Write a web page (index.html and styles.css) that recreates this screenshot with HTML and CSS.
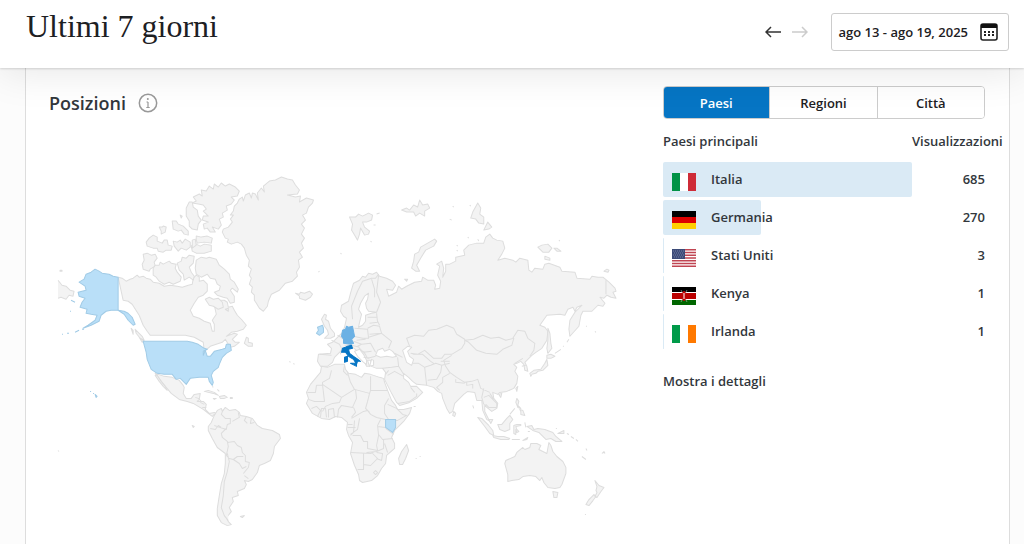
FILE: index.html
```
<!DOCTYPE html>
<html lang="it">
<head>
    <meta charset="UTF-8">
    <meta name="viewport" content="width=device-width, initial-scale=1.0">
    <title>Ultimi 7 giorni</title>
    <link rel="stylesheet" href="styles.css">
</head>
<body>

    <header class="topbar">
        <h1>Ultimi 7 giorni</h1>
        <div class="period">
            <button class="arrow" type="button" aria-label="Periodo precedente">
                <svg width="16" height="12" viewBox="0 0 16 12"><path d="M16 6H1M6 1L1 6l5 5"/></svg>
            </button>
            <button class="arrow" type="button" aria-label="Periodo successivo" disabled>
                <svg width="16" height="12" viewBox="0 0 16 12"><path d="M0 6h15M10 1l5 5-5 5"/></svg>
            </button>
            <button class="date-range" type="button">
                <span>ago 13 - ago 19, 2025</span>
                <svg width="18" height="18" viewBox="0 0 18 18">
                    <rect x="1" y="1" width="16" height="16" rx="2" fill="none" stroke="#222" stroke-width="1.6"/>
                    <path d="M1 1h16v4H1z" fill="#111"/>
                    <path d="M4 8h2v2H4zM8 8h2v2H8zM12 8h2v2h-2zM4 11h2v2H4zM8 11h2v2H8zM12 11h2v2h-2z" fill="#222"/>
                </svg>
            </button>
        </div>
    </header>

    <main class="card">
        <section class="locations">
            <h2>Posizioni
                <svg class="info" width="20" height="20" viewBox="0 0 20 20">
                    <circle cx="10" cy="10" r="8.7" fill="none" stroke="#999" stroke-width="1.5"/>
                    <path d="M10 9v5.500M8.500 9H10M8.300 14.500h3.400" stroke="#999" stroke-width="1.200" fill="none"/>
                    <circle cx="9.800" cy="6" r="1" fill="#999"/>
                </svg>
            </h2>

            <svg class="map" viewBox="50 170 570 360" role="img" aria-label="Mappa delle visualizzazioni per paese">
                <!-- north america -->
                <g class="land">
                    <path d="M119 277l4 1 4 3 4-2 3-1 4-3 2 2 4-1 3 2 4 1 3 3 6 1 5 3 6-1 7 1 5 1 6-2 4-1 1-6 3-3 3 2 0 4 4-1 4 4 0 7-4 4-5 2-4 6-4 7 3 6 6 2 5 3 6 2 2 8 2 0 0-7-2-4 4-6-2-9 3-5 7 0 3 2 1 5 4-1 2 4 3 5 4 4 5 6-3 4-6 2-6 1-5 4 8-3 3 1-5 5 3 3 4 0-5 4-4 1-2-3-3-5-3 3-12 4-6 5-1-9-9-5-9-2-35 0-3-4-4-6-4-10-7-11-4-3-5-1z"/>
                    <path d="M156 373l9 3 8 1 7 3 4 5 1 2-1 6 3 5 5 0 3-4 6-1-1 6-2 2 6 0 3 3-1 5 4 4 5-1 5 2-2 1-3-1-2 2-4-3-5-4-5-3-5-3-6-2-8-2-8-6-5-6-5-6z"/>
                    <path d="M158 375l4 6 4 5 2 4-4-4-4-5-4-6z"/>
                    <path d="M196 397l3 1 3 3M201 402l4 2M203 407l4 0"/>
                    <path d="M205 391l4-1 6 2 4 3-5-2zM220 396l5-1 3 2-3 1-4 0zM214 398l3 0-2 1zM231 397l2 0 0 1-2 0zM213 386l1 1M218 389l2 2"/>
                    <path d="M245 343l2-6 2 1 0 4 4 1 0 3-4 0z"/>
                    <path d="M132 328l2 2 0 4zM136 329l3 3 4 4 2 4-4-2-4-5zM140 337l5 4-2 1z"/>
                </g>
                <!-- arctic islands -->
                <g class="land">
                    <path d="M264 311L260 308 257 303 255 300 255 295 252 292 253 287 250 284 252 278 250 275 252 269 249 266 250 260 247 255 245 248 242 244 238 242 232 244 228 242 229 239 226 238 223 232 224 229 229 227 233 222 231 219 234 215 231 215 234 211 235 206 238 203 240 199 243 197 244 201 246 195 250 193 252 198 253 193 256 194 259 200 258 193 262 188 265 192 264 186 270 181 276 180 282 177 288 179 293 180 296 185 300 190 298 194 288 195 296 197 301 196 300 202 307 198 314 200 313 203 309 207 307 213 303 215 306 220 302 224 305 228 302 234 305 238 302 243 304 248 300 252 303 257 299 260 300 267 297 272 298 276 293 281 286 283 280 290 272 294 269 301 268 306z"/>
                    <path d="M296 293l4 1 1-2 4 1 5-2 3 3-2 3-5 3-6-2 0-2z"/>
                    <path d="M193 203l4-2-3-4 6-3 3 2-1-6 5 1 3-5 4 3 1-5 4 3 3-4 4 3 4-2 6 3 4 4-2 5-6 1 3 3-3 4-5 2 1 4-5 3 1 4-4 2 2 6-3 4-6-2 3 5-5 0-3-4-3 1-1-5 5-2-6-2 1-4 5 0-5-5 3-2-3-4-5-1z"/>
                    <path d="M187 208l3-6 3 0 1 5 4 3 1 6 3 4-3 4-1 6-5-1-3-3 0-5-3-5z"/>
                    <path d="M192 246l3-3 6 3 4-2 7 1 0 6-7 2-8 0-4-2zM197 236l5 1 6-1 5 2-1 5-7-1-7 1-1-3z"/>
                    <path d="M173 221l4 0 2 3 5 2 5 5 0 4-4-1-3-4-3 1-5-2zM160 227l3 0 1-1 3 1-1 5-4 2 0-3zM181 215l2 1-1 2z"/>
                    <path d="M147 242l3-4 4-3 4 2 0 4 5 2 2-3 3 0 1 5 4 1-1 4-5 0-3 2-5-1-1-3-4 0-6-2z"/>
                    <path d="M174 241l4 1 3-2 2 3 3-4 5 3 0 5-4 3-5-2-3 3-4-5zM193 240l3-1 1 6-4 3z"/>
                    <path d="M144 254l4-1 4 2 4-1 2 4-3 4 1 4-5 3-1 2-6-2-1-5 2-4z"/>
                    <path d="M154 268l2-3 4 0 1-3 3 2 6-3 2 2 5 1-1 4 2 4 4 5-1 4-7 3-4-2-5 2-5-3-3-4-3-2z"/>
                    <path d="M178 263l4-2 1-4 4 1 3-3 5 1-1 7-4 4 2 5 3 4-1 4-4-3-5 3-1-6-4-4z"/>
                    <path d="M197 260l5-3 5 1 3-1 7 2 3 6 5 4 5 5 1 5 4 3 4 7-1 3-5-4-2 2 4 6 0 6-4 1-3-5-4-1-6-2-3-3 5-2 1-4-3-2-2-5-5-1-3-4-6 3-5-3-1-6z"/>
                    <path d="M206 299l4-2 4 2 5-1 4 4 1 5-5 2-5-3-4-1zM226 309l3-1 0 3z"/>
                </g>
                <!-- south america -->
                <g class="land">
                    <path d="M215 415L218 410 222 408 223 411 226 407 230 410 236 409 240 412 241 415 247 416 253 418 256 422 258 425 263 428 273 430 280 434 281 438 278 442 275 446 274 453 271 460 265 463 260 465 258 472 253 479 249 481 245 480 247 484 245 488 238 491 239 495 233 497 234 501 230 507 232 511 227 517 229 521 232 524 228 525 222 522 218 515 218 508 220 495 222 483 225 473 226 463 226 453 218 447 213 438 209 430 209 426 212 422z"/>
                    <path d="M224 409l-2 5 4 4 5 0 0 5-3 1-1 5-6-2-6-2M211 428l5 1 3-4 3 2M239 412l1 5-7 4M247 416l-2 4 3 3M252 418l-1 5 4-1M227 428l-5 5 1 4 5 4 1 5M228 442l7-1 3 4 4 2 1 5 3 3 0 6 4 1-1 5-5 6M229 446l-2 9 3 3 4 1 4-3 6 0M228 453l2 8-2 10-3 10-1 14-2 12 3 8 4 5M234 459l6 4 3 5 4-2M245 475l4 3"/>
                    <path d="M241 516l4-1-2 2zM193 425l2 1-1 1zM290 361l1 1M294 363l1 1"/>
                </g>
                <!-- eurasia -->
                <g class="land">
                    <path d="M341 311L342 305 349 301 351 293 354 283 360 280 363 276 366 277 369 273 373 274 377 272 380 276 387 278 393 281 396 285 393 290 387 289 389 296 397 292 399 286 402 289 407 286 415 282 422 281 423 277 428 280 434 280 436 285 435 289 440 288 441 281 438 275 440 266 437 264 442 261 444 268 443 277 446 271 446 264 450 264 456 261 456 257 465 255 464 250 469 245 477 243 484 243 486 237 490 234 493 238 497 240 503 241 505 248 502 254 498 260 505 258 513 260 516 262 520 258 528 260 529 270 532 272 535 268 543 269 545 264 549 263 560 267 562 271 575 272 577 278 590 279 592 276 598 277 603 277 609 282 615 288 616 291 613 292 616 298 611 297 607 295 604 298 600 297 605 303 603 306 598 305 592 311 583 311 581 315 579 326 570 336 569 329 570 320 575 312 582 305 577 307 575 311 573 307 568 309 565 315 560 314 547 315 540 325 545 327 548 331 547 340 542 348 536 352 532 355 525 362 527 366 528 371 525 370 524 364 521 361 517 363 514 364 517 367 515 371 518 376 517 383 514 388 507 391 500 392 498 394 493 392 494 398 498 403 497 408 492 411 487 407 485 404 485 411 490 421 487 419 483 410 482 400 477 400 475 392 468 391 464 394 455 403 453 411 450 413 447 408 443 398 442 393 438 391 434 387 427 385 417 384 413 381 409 377 404 373 404 378 409 382 411 386 417 386 423 392 417 398 410 402 400 405 397 402 391 391 385 379 386 372 383 368 377 368 372 366 371 360 368 360 370 366 367 366 363 358 357 350 352 346 346 349 342 350 335 357 333 362 328 366 321 366 318 361 319 354 331 353 332 348 328 344 333 342 338 337 343 332 345 327 347 318 344 316z"/>
                    <path d="M322 319l3-5 2 1-1 4 3 2 2 7 4 5 0 3-4 2-6 0 4-4-1-4-3-4z"/>
                    <path d="M350 217l6 0 3-3 4 2 6-3 4 2-1 5-5 2-4 0 2 5 5 4-1 3-4 1-4-7-1 6-2 6-3-5-3-5 1-6zM377 214l3-1M374 225l2 0M341 253l1 1M371 241l1 1M319 272l1-1"/>
                    <path d="M402 210l5-2 3 2 4-5 4 2 2-7 3 5 5-1 2 4-5 3 0 5-5-3-4 3-2-4-7 0zM450 219l2 1M453 206l1 1"/>
                    <path d="M412 268l2-7 1-7 4-2 2-5 7-4 7-4 2 2-3 5-8 4-5 8-4 7 3 6-4 0zM405 279l3 0-1 2z"/>
                    <path d="M471 218l2-6 5-9 3 5-1 6 4 3 0 7-5-1-3-4zM484 230l4-8 4 5-3 2zM470 205l1 1M468 237l1 1M457 245l1 1M478 239l1 2M457 250l1 1"/>
                    <path d="M538 247l4-2 6-1 4 4-3 4-6 0zM554 248l3 0 4 3-4 0zM545 256l5 2 0 2-5-1zM604 271l3-2 2 1-1 2zM559 240l1 1"/>
                    <path d="M548 328l2 5 1 10 1 5-4 5-1-5 1-8zM547 355l4-1 4 2-4 2-4 0zM547 359l1 6-5 5-5 1-2 2-4 1-1 2-1-3 4-3 7-1 4-6zM555 353l6-4M563 346l1 0M586 326l1 0M595 331l1 1M567 342l2-3"/>
                    <path d="M516 388l2-2-1 5zM499 394l3-1-1 4zM454 411l2 2-1 3-2-1zM473 405l1 3M414 406l2 0"/>
                </g>
                <g class="sea">
                    <path d="M360 322l2-8-3-5 2-6 4-7 4-3-1 6-2 4 1 5 2 3 8 1-5 1-6 2 0 6-3 4-4 2z"/>
                    <path d="M376 355l2-5 5-2 2 3 5-2 3 2 4 5-4 1-6-1-6 1z"/>
                    <path d="M403 350l5-4 4 1-4 4 2 5 4 3-2 6-5-3z"/>
                    <path d="M360 349l4 5 3 6 0 4-3-2-6-6-3-5zM370 366l2-7 2 1 0 5z"/>
                </g>
                <g class="border">
                    <path d="M353 319l-1-13 6-15 5-10 9-3 4 0 3-4M372 279l3 10 0 8M377 312l4-10-4-10 2-17M368 317l9 0M370 323l8-1-1-9M368 328l6-3 6 1 2 7-12 1M355 328l13 1 1 9-6 0-9-2M369 337l13-4 10 8-3 7M380 325l-2-4M354 341l8 3 9-1 5 9M362 344l-4 2 6 6 8-1M364 351l4 7 8-2M332 340l8 4 2 4-1 6M320 354l12 1M338 335l5 3M395 353l8 4M398 357l1 9-7 1-9 1M399 366l5 8M352 345l8 2M357 340l9-1M345 345l8 0M364 357l6 1"/>
                    <path d="M410 346l-3-8 8-3 9 1 5-6 8-1 10-4 7 3 3 6 8 5 0 4-3 5-10 6-7 0-3 4-8 0-9-8-7 4-7-1M465 340l9-1 9-4 8 3 8-1 7 3 8-2-2 7-9 4-6 5-11-1-9-3-8-8-4-2M513 338l5-8 7 1 3 7 7 5-1 7-4 6M452 355l-8 5 2 6 4 6 7 5 8 5 7-1 6-2 3 9 9 4M467 382l0 3 6-1 0 4M456 379l0 3 9 1M440 390l-3-3 6-5 0-5 7-4M427 385l-2-18-6-4-6 0M425 367l6-2 5-2 6 2 8-2M442 365l-1 7-4 7-9 1M413 354l10 0 8 7 3 2M441 361l9 0M388 375l7-4 9 5M386 374l3-4M398 403l12-2 7-5 0-3M411 387l4 5M484 388l-2 9 2 7M484 397l5-2 8 8 0 4-8 0-3-3M490 393l4 6M515 363l8-5M522 366l4-1M606 280l0 14"/>
                </g>
                <!-- africa -->
                <g class="land">
                    <path d="M322 366L328 367 335 364 345 364 346 369 349 373 356 374 362 377 365 373 371 374 380 377 384 378 385 382 388 390 392 400 396 405 398 409 404 409 412 407 410 413 404 421 395 430 392 437 395 443 395 448 387 455 386 463 382 468 378 475 372 480 363 482 360 480 359 474 355 465 351 453 353 442 349 435 347 429 348 422 342 417 336 416 330 419 322 418 313 413 310 408 307 403 309 398 307 392 311 384 316 378 321 372z"/>
                    <path d="M407 444l2 6-3 8-3 6-3 0-1-6 3-7zM416 458l1 0M420 456l1 0"/>
                </g>
                <g class="border">
                    <path d="M308 392l8 0 1-7 6 0 0-3 7-4 2-8M323 384l2 17-10 0-6-2M323 384l19 13 13-8-4-7-3-10M345 365l-1 6 4 4M355 389l15 4 1-3 0-14M371 390l17 0M370 393l-2 8-2 7 4 4M342 397l-2 5-7 1-7 3-3 5M356 389l1 9-4 9-11-2-3 4-1 8M354 407l2 5-4 5M352 418l12-7 4-1 3 4 6 3 9 2M389 398l-4 7 0 8 4 6M388 404l9 4 6 6 4 1-9 5-12-1M321 417l1-9 4 0 1 9M329 417l0-8 5-1 1 9M312 408l5-2 4 4-3 6M355 420l-1 12-3 3M360 418l-2 11-7 5M353 435l8 0 3 6 4 0 0 7 10 2-1-5 2-10-1-10 3-6M378 426l8 1M386 428l8 6M379 434l4 5 10-1M384 439l0 9-7 3-10 1M385 443l3 9M351 452l20 1 3-1M364 453l0 16-6 0M364 464l7 1 7-7-5-5M377 452l6 1-1 7-5-2M374 472l2-2 2 2-2 2zM348 424l5 0M348 427l8 0"/>
                </g>
                <!-- oceania -->
                <g class="land">
                    <path d="M478 417l4 1 7 7 4 5 1 5-4-2-5-7zM493 435l5 1 6 0 6 2-1 1-8 0-7-2zM512 439l8 0M523 440l5-3-1 2z"/>
                    <path d="M498 424l4 0 5-6 3-3 3 4-3 4 0 6-5 2-5-2zM514 425l3-1 4 0 0 1-5 1 1 3 2 2-2 1-1-3 0 5-2-1 0-4zM525 422l1 5M528 431l2 0M517 398l2 3-1 4 3 3-3-1-2-5zM520 409l3 1 2 5-4-1 0-3zM510 414l5-6M493 419l-4 0 2 4z"/>
                    <path d="M527 426l5-1 2 4 4-1 7 1 8 3 3 4 6 5-6 0-5-3-5 1-3-3-4-4-6-2zM558 433l6-3 0 3zM567 433l2 1M571 436l3 2M576 439l2 2M556 428l1 0"/>
                    <path d="M505 463L506 460 515 456 517 452 523 447 525 449 530 447 531 443 537 443 541 445 539 449 547 453 549 442 551 445 553 451 557 456 563 461 566 467 566 473 562 484 560 487 555 488 548 487 544 482 542 477 540 480 536 476 530 475 523 476 519 479 512 480 508 481 508 474z"/>
                    <path d="M553 491l5 1-1 5-3 0zM595 480l4 5 5 2-3 4-4 6-2-1 2-4-1-2 1-4zM594 494l2 2-3 4-4 5-3-1 3-5zM582 456l4 3M586 448l1 2M602 453l2-2 1 2M585 514l1 0"/>
                    <path d="M59 280l4 5 4 1 4 4 4 1-1 5-4-1-3 4-5-2-3 1M61 270l2 0 0 1-2 0zM59 450l1 1"/>
                </g>
                <!-- countries with views -->
                <g class="views-low">
                    <path d="M119 277L114 276 110 274 103 273 100 271 96 269 92 272 87 274 85 279 80 282 86 286 87 290 79 292 80 296 86 298 83 302 81 307 88 309 87 313 92 314 98 315 96 320 89 325 84 328 92 325 100 321 102 315 107 311 112 310 119 310z"/>
                    <path d="M119 310l6 1 4 2 4 4 3 7-2 1-5-5-4-6zM76 332l4-2M83 329l2 0M68 333l2 0M63 334l1 0M72 300l4 2M71 311l1 0M91 391l1 0M94 393l1 0M96 394l2 2-1 1z"/>
                    <path d="M144 341l44 0 5 1 6 2 6 4 3 1-4 2 0 4 2-5 2 6 3 0 4-5 8-2 3-1 1-4 4 0 1 6-5 3-4 4-3 7-1 3-5 4-2 4 2 7-1 3-3-4-1-4-9 0-9 1-4 6-6-6-4 1-4-5-8 0-7-1-6-4-4-10-1-7z"/>
                    <path d="M317 333l2-3-1-3 5-2 1 3 0 4-4 3z"/>
                    <path d="M386 419l10 0 0 8-3 5-7-5z"/>
                </g>
                <path class="views-mid" d="M347 326l2 1 4-1 2 10-3 3 2 4-3 1-7-1 0-4-2-3 1-6 3-1z"/>
                <path class="views-high" d="M343 348l3-1 2-1 4-1 1 3-4 1 1 4 4 3 3 2 4 3-3 0-1 3-3-5-5-3-3-4-4 0zM351 363l6 0 0 3zM345 357l3-1 0 5-3 1z"/>
            </svg>
        </section>

        <aside class="details">
            <div class="tabs">
                <button class="tab active" type="button">Paesi</button>
                <button class="tab" type="button">Regioni</button>
                <button class="tab" type="button">Città</button>
            </div>

            <table class="countries">
                <thead>
                    <tr><th>Paesi principali</th><th>Visualizzazioni</th></tr>
                </thead>
                <tbody>
                    <tr>
                        <td>
                            <span class="bar" style="width: 100%"></span>
                            <span class="name">
                                <svg class="flag" viewBox="0 0 24 18"><path fill="#fff" d="M0 0h24v18H0z"/><path fill="#009246" d="M0 0h8v18H0z"/><path fill="#ce2b37" d="M16 0h8v18h-8z"/></svg>
                                Italia
                            </span>
                        </td>
                        <td>685</td>
                    </tr>
                    <tr>
                        <td>
                            <span class="bar" style="width: 39.4%"></span>
                            <span class="name">
                                <svg class="flag" viewBox="0 0 24 18"><path d="M0 0h24v6H0z"/><path fill="#d00" d="M0 6h24v6H0z"/><path fill="#ffce00" d="M0 12h24v6H0z"/></svg>
                                Germania
                            </span>
                        </td>
                        <td>270</td>
                    </tr>
                    <tr>
                        <td>
                            <span class="bar" style="width: 0.4%"></span>
                            <span class="name">
                                <svg class="flag" viewBox="0 0 24 18">
                                    <path fill="#fff" d="M0 0h24v18H0z"/>
                                    <path stroke="#c04552" stroke-width="1.400" d="M0 .7h24M0 3.500h24M0 6.300h24M0 9h24M0 11.800h24M0 14.500h24M0 17.300h24"/>
                                    <path fill="#3c4b78" d="M0 0h13v10H0z"/>
                                    <path stroke="#8d97b5" stroke-dasharray="1 1" stroke-width=".7" d="M1 2h11M2 4h10M1 6h11M2 8h10"/>
                                </svg>
                                Stati Uniti
                            </span>
                        </td>
                        <td>3</td>
                    </tr>
                    <tr>
                        <td>
                            <span class="bar" style="width: 0.4%"></span>
                            <span class="name">
                                <svg class="flag" viewBox="0 0 24 18">
                                    <path fill="#fff" d="M0 0h24v18H0z"/>
                                    <path d="M0 0h24v5H0z"/>
                                    <path fill="#b00" d="M0 6h24v6H0z"/>
                                    <path fill="#060" d="M0 13h24v5H0z"/>
                                    <path stroke="#bbb" stroke-width=".6" d="M9 3l6 12M15 3L9 15"/>
                                    <ellipse cx="12" cy="9" rx="2" ry="5" fill="#b00"/>
                                    <path stroke="#fff" d="M12 6v6"/>
                                </svg>
                                Kenya
                            </span>
                        </td>
                        <td>1</td>
                    </tr>
                    <tr>
                        <td>
                            <span class="bar" style="width: 0.4%"></span>
                            <span class="name">
                                <svg class="flag" viewBox="0 0 24 18"><path fill="#fff" d="M0 0h24v18H0z"/><path fill="#009a49" d="M0 0h8v18H0z"/><path fill="#ff7900" d="M16 0h8v18h-8z"/></svg>
                                Irlanda
                            </span>
                        </td>
                        <td>1</td>
                    </tr>
                </tbody>
            </table>

            <a class="more" href="#">Mostra i dettagli</a>
        </aside>
    </main>

</body>
</html>
```
FILE: styles.css
```
* {
    box-sizing: border-box;
}
body {
    font-family: "Segoe UI", "Open Sans", "Noto Sans", sans-serif;
    font-size: 13px;
    font-weight: 600;
    line-height: 20px;
    color: #32373c;
    background: #fcfcfc;
    margin: 0;
    min-height: 100vh;
    display: flex;
    flex-direction: column;
}
button {
    font: inherit;
    color: #1d2023;
    background: white;
    padding: 0;
    cursor: pointer;
}
.topbar {
    position: sticky;
    top: 0;
    z-index: 1;
    display: flex;
    justify-content: space-between;
    align-items: flex-start;
    padding: 6px 15px 17px 26px;
    background: white;
    box-shadow: 0 1px 2px rgba(0, 0, 0, 0.15), 0 4px 40px rgba(0, 0, 0, 0.1);
}
h1 {
    margin: 0;
    font-family: "Liberation Serif", serif;
    font-size: 32px;
    font-weight: 400;
    line-height: 40px;
    color: #1d2023;
}
.period {
    display: flex;
    align-items: center;
    gap: 11px;
    padding-top: 7px;
}
.arrow {
    display: flex;
    border: none;
}
.arrow svg {
    fill: none;
    stroke: #333;
    stroke-width: 1.5;
}
.arrow:disabled svg {
    stroke: #ccc;
}
.date-range {
    display: flex;
    align-items: center;
    justify-content: space-between;
    gap: 12px;
    height: 38px;
    margin-left: 12px;
    padding: 0 10px 0 7px;
    border: 1px solid #ccc;
    border-radius: 3px;
}
.card {
    flex: 1;
    display: grid;
    grid-template-columns: 1fr 322px;
    gap: 43px;
    margin: 0 14px 0 25px;
    padding: 18px 24px 14px 23px;
    background: white;
    border: solid #ddd;
    border-width: 0 1px;
}
h2 {
    display: flex;
    align-items: center;
    gap: 12px;
    margin: 0;
    font-size: 18px;
    font-weight: 600;
    line-height: 34px;
}
.map {
    display: block;
    width: 100%;
    margin-top: 50px;
    stroke-linejoin: round;
    stroke-width: 1;
}
.land {
    fill: #f3f3f3;
    stroke: #ddd;
}
.border {
    fill: none;
    stroke: #ddd;
}
.sea {
    fill: white;
    stroke: #ddd;
}
.views-low {
    fill: #b9dff8;
    stroke: #a1cbe6;
}
.views-mid {
    fill: #6cb1e4;
    stroke: #6cb1e4;
}
.views-high {
    fill: #0675c4;
    stroke: #0675c4;
}
.tabs {
    display: flex;
    height: 33px;
    border: 1px solid #ccc;
    border-radius: 4px;
    overflow: hidden;
}
.tab {
    flex: 1;
    border: none;
    border-left: 1px solid #ccc;
}
.tab.active {
    margin: -1px 0 -1px -1px;
    border: none;
    background: #0675c4;
    color: white;
}
.countries {
    width: 100%;
    margin-top: 9px;
    table-layout: fixed;
    border-spacing: 0 3px;
}
.countries th {
    height: 28px;
    padding: 0 0 8px;
    font-weight: 600;
    text-align: left;
    white-space: nowrap;
}
.countries th:first-child {
    width: 249px;
}
.countries td {
    position: relative;
    height: 35px;
    padding: 0 0 2px;
}
.countries td:last-child {
    text-align: right;
}
.bar {
    position: absolute;
    top: 0;
    bottom: 0;
    left: 0;
    min-width: 1px;
    background: #daeaf5;
    border-radius: 2px;
}
.name {
    position: relative;
    display: flex;
    align-items: center;
    gap: 15px;
    padding-left: 9px;
}
.flag {
    width: 24px;
    height: 18px;
    margin-top: 6px;
}
.more {
    display: inline-block;
    margin-top: 19px;
    color: #32373c;
    text-decoration: none;
}
```
